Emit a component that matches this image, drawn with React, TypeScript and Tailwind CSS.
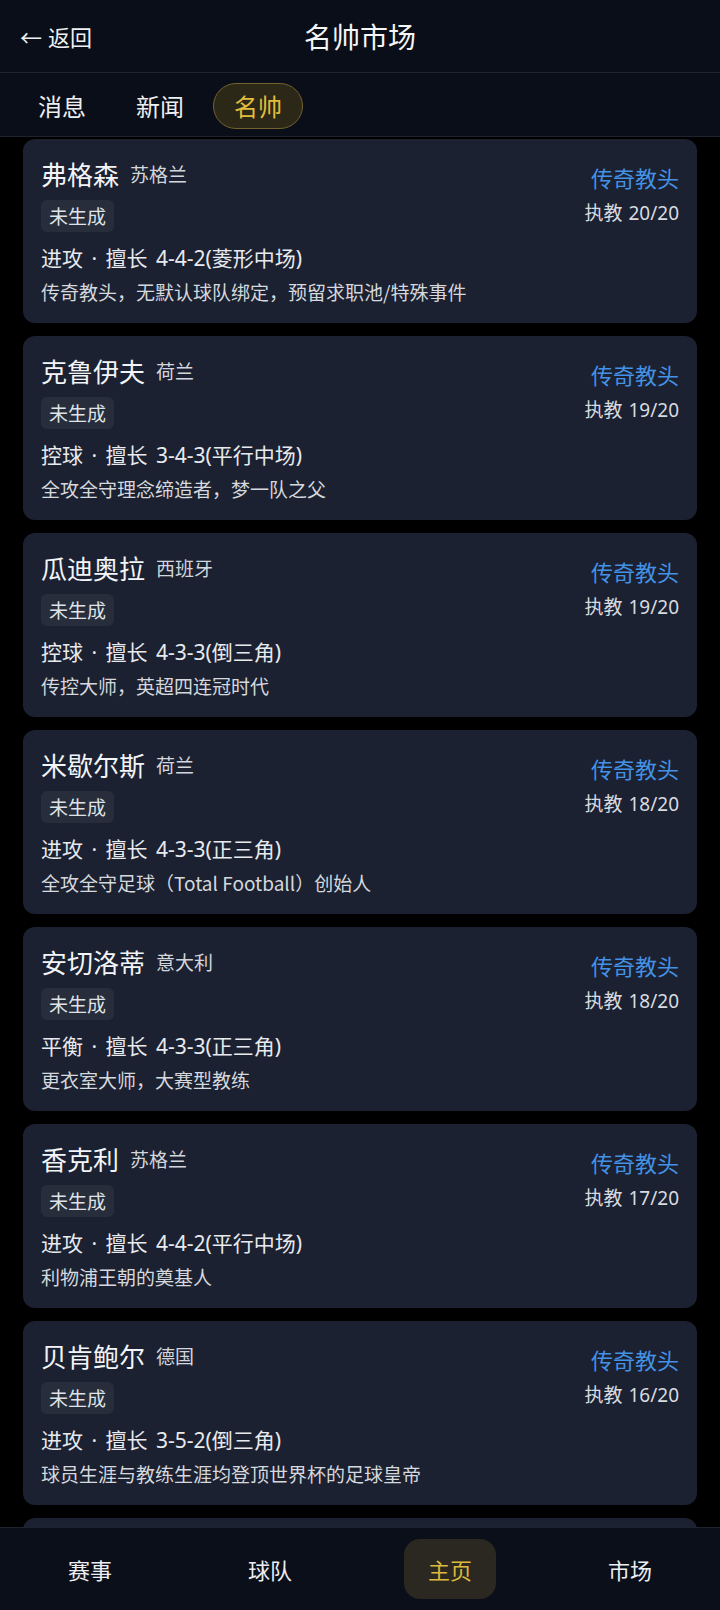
import React from 'react';

type Coach = {
  name: string;
  country: string;
  seasons: string;
  style: string;
  note: string;
};

const coaches: Coach[] = [
  { name: '弗格森', country: '苏格兰', seasons: '20/20', style: '进攻 · 擅长 4-4-2(菱形中场)', note: '传奇教头，无默认球队绑定，预留求职池/特殊事件' },
  { name: '克鲁伊夫', country: '荷兰', seasons: '19/20', style: '控球 · 擅长 3-4-3(平行中场)', note: '全攻全守理念缔造者，梦一队之父' },
  { name: '瓜迪奥拉', country: '西班牙', seasons: '19/20', style: '控球 · 擅长 4-3-3(倒三角)', note: '传控大师，英超四连冠时代' },
  { name: '米歇尔斯', country: '荷兰', seasons: '18/20', style: '进攻 · 擅长 4-3-3(正三角)', note: '全攻全守足球（Total Football）创始人' },
  { name: '安切洛蒂', country: '意大利', seasons: '18/20', style: '平衡 · 擅长 4-3-3(正三角)', note: '更衣室大师，大赛型教练' },
  { name: '香克利', country: '苏格兰', seasons: '17/20', style: '进攻 · 擅长 4-4-2(平行中场)', note: '利物浦王朝的奠基人' },
  { name: '贝肯鲍尔', country: '德国', seasons: '16/20', style: '进攻 · 擅长 3-5-2(倒三角)', note: '球员生涯与教练生涯均登顶世界杯的足球皇帝' },
];

const tabs = ['消息', '新闻', '名帅'];
const navItems = ['赛事', '球队', '主页', '市场'];

// latin-first stack so digits and the middle dot come out a bit wider / narrower like the app
const latinFirst = { fontFamily: '"Noto Sans", "Noto Sans CJK SC", sans-serif' };

// --- Coach card ---
const CoachCard = ({ coach }: { coach: Coach }) => (
  <div className="shrink-0 h-[184px] rounded-[12px] bg-[#1b2131] px-[18px] pt-[16px] flex justify-between">
    <div className="flex flex-col">
      <div className="flex items-center gap-[11px] h-[38px]">
        <span className="text-[26px] leading-[38px] text-[#f2f4f7]">{coach.name}</span>
        <span className="text-[19px] leading-[38px] text-[#d3d6dc]">{coach.country}</span>
      </div>
      <div className="mt-[7px] self-start h-[32px] px-[8px] rounded-[6px] bg-[#272d3b] text-[19px] leading-[32px] text-[#dfe2e6]">
        未生成
      </div>
      <div
        className="mt-[11px] text-[21px] leading-[30px] text-[#e8eaee] whitespace-nowrap [word-spacing:3px]"
        style={latinFirst}
      >
        {coach.style}
      </div>
      <div className="mt-[5px] text-[19px] leading-[28px] text-[#d5d8dd] whitespace-nowrap">{coach.note}</div>
    </div>
    <div className="flex flex-col items-end pt-[1px]">
      <span className="text-[22px] leading-[43px] text-[#4392e6]">传奇教头</span>
      <span className="text-[19px] leading-[28px] text-[#d8dbe0] [word-spacing:1px]" style={latinFirst}>
        执教 {coach.seasons}
      </span>
    </div>
  </div>
);

export default function App() {
  return (
    <div
      className="w-[720px] h-[1610px] bg-black flex flex-col overflow-hidden"
      style={{ fontFamily: '"Noto Sans CJK SC", "Noto Sans", sans-serif' }}
    >
      {/* top bar */}
      <header className="shrink-0 h-[73px] bg-[#0a0e18] border-b border-[#1e2330] relative flex items-center">
        <button className="flex items-center pl-[20px] text-[22px] text-[#eef0f3]">
          <span className="mr-[6px]">←</span>
          <span>返回</span>
        </button>
        <h1 className="absolute left-0 right-0 text-center text-[28px] text-[#f4f5f7] pointer-events-none">名帅市场</h1>
      </header>

      {/* tabs */}
      <nav className="shrink-0 h-[64px] bg-[#0a0e18] border-b border-[#1e2330] flex items-center gap-[8px] px-[17px] pt-[3px]">
        {tabs.map(t => {
          const active = t === '名帅';
          return (
            <div
              key={t}
              className={`h-[46px] px-[20px] rounded-full border text-[24px] leading-[44px] ${active ? 'bg-[#2b2818] border-[#74622e] text-[#e2bd3c]' : 'border-transparent text-[#eceef1]'}`}
            >
              {t}
            </div>
          );
        })}
      </nav>

      {/* list */}
      <main className="flex-1 min-h-0 overflow-hidden px-[23px] pt-[2px] flex flex-col gap-[13px]">
        {coaches.map(c => (
          <CoachCard key={c.name} coach={c} />
        ))}
        {/* next card, only its top edge shows above the bottom bar */}
        <div className="shrink-0 h-[184px] rounded-[12px] bg-[#1b2131]" />
      </main>

      {/* bottom nav */}
      <footer className="shrink-0 h-[83px] bg-[#0b0f19] border-t border-[#1e2330] grid grid-cols-4 items-center">
        {navItems.map(n => {
          const active = n === '主页';
          return (
            <div key={n} className="flex justify-center">
              <div
                className={`w-[92px] h-[60px] rounded-[16px] flex items-center justify-center text-[22px] ${active ? 'bg-[#2a2820] text-[#dcb83c]' : 'text-[#eceef1]'}`}
              >
                {n}
              </div>
            </div>
          );
        })}
      </footer>
    </div>
  );
}
